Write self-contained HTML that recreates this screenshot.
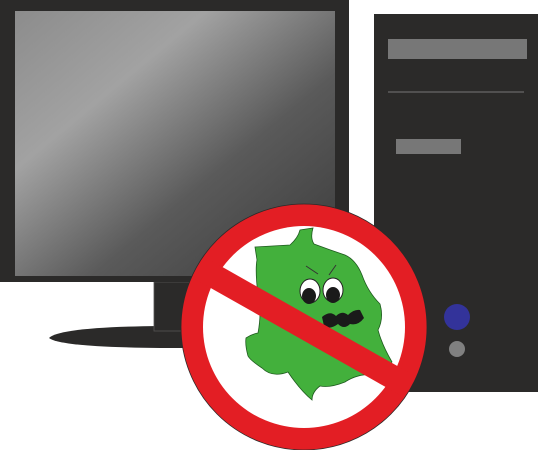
<!DOCTYPE html>
<html><head><style>html,body{margin:0;padding:0;background:#fff;width:538px;height:450px;overflow:hidden}</style></head>
<body>
<svg width="538" height="450" viewBox="0 0 538 450" xmlns="http://www.w3.org/2000/svg">
<defs>
<linearGradient id="g" x1="0" y1="0" x2="1" y2="1">
<stop offset="0" stop-color="#8c8c8c"/>
<stop offset="0.3" stop-color="#a2a2a2"/>
<stop offset="0.62" stop-color="#5a5a5a"/>
<stop offset="1" stop-color="#3a3a3a"/>
</linearGradient>
</defs>
<rect x="374" y="14" width="164" height="378" fill="#2b2a29"/>
<rect x="388" y="39" width="139" height="20" fill="#777"/>
<line x1="388" y1="92" x2="524" y2="92" stroke="#777" stroke-width="1"/>
<rect x="396" y="139" width="65" height="15" fill="#777"/>
<circle cx="457" cy="317" r="13" fill="#33339a"/>
<circle cx="457" cy="349" r="8" fill="#808080"/>
<path d="M49,338 Q60,327 160,326 L300,326 L300,348 L160,348 Q60,347 49,338 Z" fill="#2b2a29"/>
<rect x="154" y="282" width="100" height="49" fill="#2b2a29" stroke="#555" stroke-width="0.8"/>
<rect x="0" y="0" width="349" height="282" fill="#2b2a29"/>
<rect x="15" y="11" width="320" height="265" fill="url(#g)"/>
<circle cx="304" cy="327" r="123" fill="#e31e24" stroke="#2b2a29" stroke-width="0.8"/>
<circle cx="304" cy="327" r="101" fill="#fff"/>
<path d="M255,247 L290,245 Q298,238 300,230 L313,228 Q310,238 314,244 Q330,250 345,255 Q356,260 362,275 Q368,292 380,304 Q384,318 378,330 Q382,345 392,362 L380,375 Q360,372 345,382 Q330,388 320,386 Q312,392 312,400 Q300,390 288,372 Q272,378 262,368 Q250,360 248,356 Q245,345 246,338 Q252,334 258,333 Q262,312 258,295 Q255,270 257,260 Z" fill="#43b03c" stroke="#1e5a1e" stroke-width="0.8"/>
<ellipse cx="310" cy="291" rx="10" ry="12" fill="#fff" stroke="#222" stroke-width="1"/>
<ellipse cx="333" cy="290" rx="10" ry="12" fill="#fff" stroke="#222" stroke-width="1"/>
<ellipse cx="309" cy="296" rx="7" ry="8" fill="#1a1a1a"/>
<ellipse cx="333" cy="295" rx="7" ry="8" fill="#1a1a1a"/>
<path d="M306,266 L318,274 M336,265 L329,275" stroke="#333" stroke-width="1"/>
<path d="M322,317 Q330,310 336,316 Q342,310 348,315 Q354,309 360,310 L364,318 Q358,326 350,324 Q344,330 338,324 Q330,330 324,326 Z" fill="#1a1a1a"/>
<line x1="198" y1="267" x2="410" y2="387" stroke="#e31e24" stroke-width="24"/>
</svg>
</body></html>
